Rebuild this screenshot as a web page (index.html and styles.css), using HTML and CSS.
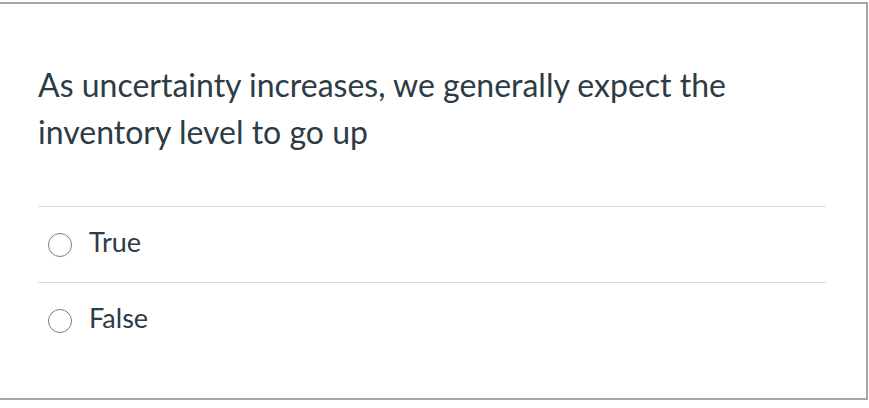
FILE: index.html
```html
<!DOCTYPE html>
<html lang="en">
<head>
<meta charset="utf-8">
<title>Quiz question</title>
<link rel="stylesheet" href="styles.css">
</head>
<body>
<div class="card">
  <div class="question">As uncertainty increases, we generally expect the inventory level to go up</div>
  <div class="answers">
    <label class="answer">
      <span class="radio"></span>
      <span class="answer-text">True</span>
    </label>
    <label class="answer">
      <span class="radio"></span>
      <span class="answer-text">False</span>
    </label>
  </div>
</div>
</body>
</html>
```

FILE: styles.css
```css
html, body {
  margin: 0;
  padding: 0;
  background: #ffffff;
}

body {
  font-family: Lato, "Noto Sans", sans-serif;
  color: #2d3b45;
}

.card {
  margin: 2px 1px 0 -4px;
  border: 2px solid #a6a6a6;
  padding: 57px 40px 40px 40px;
}

.question {
  font-size: 32px;
  line-height: 47px;
  max-width: 740px;
}

.answers {
  margin-top: 51px;
  border-top: 1px solid #d9dcde;
}

.answer {
  display: flex;
  align-items: flex-start;
  padding: 17px 0 22px 0;
  border-bottom: 1px solid #d9dcde;
}

.answer:last-child {
  border-bottom: none;
}

.radio {
  width: 22px;
  height: 22px;
  border: 1.5px solid #7b7f83;
  border-radius: 50%;
  margin: 9px 17px 0 10px;
  flex: none;
}

.answer-text {
  font-size: 27px;
  line-height: 36px;
}
```
